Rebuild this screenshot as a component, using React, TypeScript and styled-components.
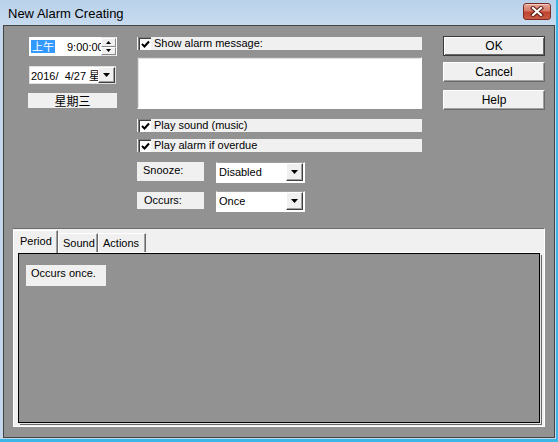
import { createGlobalStyle, styled } from "styled-components";

const GlobalStyle = createGlobalStyle`
  html, body {
    margin: 0;
    padding: 0;
    background: #ffffff;
  }
  body {
    font-family: "Liberation Sans", Arial, "Noto Sans CJK SC", sans-serif;
    font-size: 11px;
    color: #000;
  }
  * {
    box-sizing: border-box;
  }
`;

const FACE = "#f0f0f0";
const DARK = "#929292";

const Window = styled.div`
  width: 558px;
  height: 442px;
  display: flex;
  flex-direction: column;
  padding: 0 3px 4px 3px;
  background: linear-gradient(#b9d1ea, #c7dbef 25px, #c3d8ed 25px);
  box-shadow: inset -2px -3px 0 #3cb6e4;
`;

const TitleBar = styled.div`
  height: 25px;
  flex-shrink: 0;
  display: flex;
  align-items: center;
  justify-content: space-between;
  padding: 2px 4px 0 5px;
`;

const Title = styled.div`
  font-family: "Liberation Sans", Arial, sans-serif;
  font-size: 13px;
  color: #000;
`;

const CloseBtn = styled.div`
  width: 28px;
  height: 17px;
  margin-top: -4px;
  border: 1px solid #7d2b22;
  border-radius: 3px;
  background: linear-gradient(#e9a797, #d47a68 45%, #c0432f 55%, #c85c45);
  display: flex;
  align-items: center;
  justify-content: center;
  box-shadow: inset 0 1px 0 rgba(255, 255, 255, 0.45);
`;

const Body = styled.div`
  flex: 1;
  background: ${DARK};
  border: 1px solid #444;
  padding: 11px 9px 10px 9px;
  display: flex;
  flex-direction: column;
`;

const Top = styled.div`
  height: 191px;
  flex-shrink: 0;
  display: flex;
  padding-left: 15px;
`;

const LeftCol = styled.div`
  width: 89px;
  display: flex;
  flex-direction: column;
`;

const TimeBox = styled.div`
  height: 19px;
  margin-left: 1px;
  display: flex;
  background: #fff;
`;

const TimeText = styled.div`
  width: 72px;
  display: flex;
  align-items: center;
  padding-left: 2px;
  white-space: nowrap;
  overflow: hidden;
`;

const Selected = styled.span`
  background: #3399ff;
  color: #fff;
  height: 13px;
  line-height: 13px;
  padding: 0 1px;
  margin-right: 12px;
  font-family: "Noto Sans CJK SC", sans-serif;
`;

const Spin = styled.div`
  width: 15px;
  display: flex;
  flex-direction: column;
  background: #e6e6e6;
  padding: 1px 0;
`;

const SpinHalf = styled.div`
  flex: 1;
  background: ${FACE};
  border-top: 1px solid #fff;
  border-left: 1px solid #fff;
  border-right: 1px solid #8a8a8a;
  border-bottom: 1px solid #8a8a8a;
  display: flex;
  align-items: center;
  justify-content: center;
`;

const DateBox = styled.div`
  height: 18px;
  margin-top: 10px;
  margin-left: 1px;
  width: 87px;
  display: flex;
  background: #fff;
  border: 1px solid #e0e0e0;
`;

const DateText = styled.div`
  flex: 1;
  display: flex;
  align-items: center;
  padding-left: 1px;
  white-space: pre;
  overflow: hidden;
`;

const DropBtn = styled.div<{ $w: number }>`
  width: ${(p) => p.$w}px;
  flex-shrink: 0;
  background: ${FACE};
  border-top: 1px solid #fff;
  border-left: 1px solid #fff;
  border-right: 1px solid #404040;
  border-bottom: 1px solid #404040;
  box-shadow: inset -1px -1px 0 #a0a0a0;
  display: flex;
  align-items: center;
  justify-content: center;
`;

const Weekday = styled.div`
  height: 15px;
  margin-top: 9px;
  background: ${FACE};
  display: flex;
  align-items: center;
  justify-content: center;
  font-family: "Noto Sans CJK SC", sans-serif;
  font-size: 12px;
`;

const MidCol = styled.div`
  width: 285px;
  margin-left: 20px;
  display: flex;
  flex-direction: column;
`;

const CheckRow = styled.div<{ $mt: number }>`
  height: 13px;
  margin-top: ${(p) => p.$mt}px;
  background: ${FACE};
  display: flex;
  align-items: center;
  padding-left: 1px;
  line-height: 13px;
`;

const CheckBox = styled.div`
  width: 13px;
  height: 13px;
  background: #fff;
  border-top: 1px solid #808080;
  border-left: 1px solid #808080;
  box-shadow: inset 1px 1px 0 #404040;
  display: flex;
  align-items: center;
  justify-content: center;
  margin-right: 3px;
`;

const MessageBox = styled.div`
  height: 52px;
  margin-top: 7px;
  background: #fff;
  border-top: 1px solid #a0a0a0;
  border-left: 1px solid #a0a0a0;
  border-right: 1px solid #fff;
  border-bottom: 1px solid #fff;
  box-shadow: inset 1px 1px 0 #e3e3e3;
`;

const FieldRow = styled.div<{ $mt: number }>`
  display: flex;
  align-items: flex-start;
  margin-top: ${(p) => p.$mt}px;
`;

const FieldLabel = styled.div<{ $h: number; $pl: number; $mt: number }>`
  width: 67px;
  height: ${(p) => p.$h}px;
  margin-top: ${(p) => p.$mt}px;
  background: ${FACE};
  padding: 2px 0 0 ${(p) => p.$pl}px;
  line-height: 13px;
`;

const Combo = styled.div`
  width: 89px;
  height: 21px;
  margin-left: 12px;
  display: flex;
  background: #fff;
  border-top: 1px solid #a0a0a0;
  border-left: 1px solid #fff;
  border-right: 1px solid #fff;
  border-bottom: 1px solid #fff;
  padding: 0 1px 1px 0;
`;

const ComboText = styled.div`
  flex: 1;
  display: flex;
  align-items: center;
  padding-left: 2px;
`;

const RightCol = styled.div`
  width: 102px;
  margin-left: 21px;
  display: flex;
  flex-direction: column;
  margin-top: -1px;
`;

const Button = styled.div<{ $mt: number; $default?: boolean }>`
  height: 20px;
  margin-top: ${(p) => p.$mt}px;
  background: ${FACE};
  display: flex;
  align-items: center;
  justify-content: center;
  font-size: 12px;
  border: 1px solid ${(p) => (p.$default ? "#3a3a3a" : FACE)};
  border-top-color: ${(p) => (p.$default ? "#3a3a3a" : "#fff")};
  border-left-color: ${(p) => (p.$default ? "#3a3a3a" : "#fff")};
  border-right-color: ${(p) => (p.$default ? "#3a3a3a" : "#6a6a6a")};
  border-bottom-color: ${(p) => (p.$default ? "#3a3a3a" : "#6a6a6a")};
  box-shadow: ${(p) =>
    p.$default
      ? "inset 1px 1px 0 #fff, inset -1px -1px 0 #6a6a6a"
      : "inset -1px -1px 0 #a0a0a0"};
`;

const TabControl = styled.div`
  width: 532px;
  height: 199px;
  flex-shrink: 0;
  background: ${FACE};
  border-top: 1px solid #6d6d6d;
  border-right: 1px solid #fff;
  display: flex;
  flex-direction: column;
`;

const TabStrip = styled.div`
  height: 23px;
  display: flex;
  align-items: flex-end;
  position: relative;
  z-index: 1;
`;

const Tab = styled.div<{ $active?: boolean; $w: number }>`
  width: ${(p) => p.$w}px;
  height: ${(p) => (p.$active ? 23 : 19)}px;
  margin-bottom: ${(p) => (p.$active ? -1 : 0)}px;
  background: ${FACE};
  border-left: 1px solid #fff;
  border-top: 1px solid #fff;
  border-right: 1px solid #6a6a6a;
  box-shadow: inset -1px 0 0 #a0a0a0;
  padding: ${(p) => (p.$active ? "4px 0 0 6px" : "3px 0 0 4px")};
  line-height: 13px;
`;

const Page = styled.div`
  flex: 1;
  border-top: 1px solid #fff;
  border-left: 1px solid #fff;
  border-bottom: 1px solid #fff;
  padding: 0 4px 3px 4px;
  display: flex;
`;

const Panel = styled.div`
  flex: 1;
  background: ${DARK};
  border: 1px solid #000;
  box-shadow: 1px 1px 0 #e3e3e3, 2px 2px 0 #6a6a6a;
  padding: 11px 0 0 7px;
`;

const InfoLabel = styled.div`
  width: 80px;
  height: 21px;
  background: ${FACE};
  padding: 2px 0 0 5px;
  line-height: 13px;
`;

const DownArrow = ({ w = 7, h = 4 }: { w?: number; h?: number }) => (
  <svg width={w} height={h} viewBox={`0 0 ${w} ${h}`}>
    <polygon points={`0,0 ${w},0 ${w / 2},${h}`} fill="#000" />
  </svg>
);

const UpArrow = () => (
  <svg width="5" height="3" viewBox="0 0 5 3">
    <polygon points="0,3 5,3 2.5,0" fill="#000" />
  </svg>
);

const Check = () => (
  <svg width="9" height="9" viewBox="0 0 9 9">
    <polyline
      points="1,4 3.5,6.5 8,1.5"
      fill="none"
      stroke="#000"
      strokeWidth="2"
    />
  </svg>
);

const CloseX = () => (
  <svg width="14" height="11" viewBox="0 0 14 11">
    <g strokeLinecap="square">
      <path d="M3 2 L11 9 M11 2 L3 9" stroke="#5e1d15" strokeWidth="4.2" />
      <path d="M3 2 L11 9 M11 2 L3 9" stroke="#fff" strokeWidth="2.2" />
    </g>
  </svg>
);

export default function App() {
  return (
    <>
      <GlobalStyle />
      <Window>
        <TitleBar>
          <Title>New Alarm Creating</Title>
          <CloseBtn>
            <CloseX />
          </CloseBtn>
        </TitleBar>

        <Body>
          <Top>
            <LeftCol>
              <TimeBox>
                <TimeText>
                  <Selected>上午</Selected>
                  9:00:00
                </TimeText>
                <Spin>
                  <SpinHalf>
                    <UpArrow />
                  </SpinHalf>
                  <SpinHalf>
                    <DownArrow w={5} h={3} />
                  </SpinHalf>
                </Spin>
              </TimeBox>
              <DateBox>
                <DateText>2016/  4/27 星期三</DateText>
                <DropBtn $w={17}>
                  <DownArrow />
                </DropBtn>
              </DateBox>
              <Weekday>星期三</Weekday>
            </LeftCol>

            <MidCol>
              <CheckRow $mt={0}>
                <CheckBox>
                  <Check />
                </CheckBox>
                Show alarm message:
              </CheckRow>
              <MessageBox />
              <CheckRow $mt={10}>
                <CheckBox>
                  <Check />
                </CheckBox>
                Play sound (music)
              </CheckRow>
              <CheckRow $mt={7}>
                <CheckBox>
                  <Check />
                </CheckBox>
                Play alarm if overdue
              </CheckRow>
              <FieldRow $mt={10}>
                <FieldLabel $h={19} $pl={6} $mt={0}>
                  Snooze:
                </FieldLabel>
                <Combo>
                  <ComboText>Disabled</ComboText>
                  <DropBtn $w={17}>
                    <DownArrow />
                  </DropBtn>
                </Combo>
              </FieldRow>
              <FieldRow $mt={8}>
                <FieldLabel $h={17} $pl={7} $mt={1}>
                  Occurs:
                </FieldLabel>
                <Combo>
                  <ComboText>Once</ComboText>
                  <DropBtn $w={17}>
                    <DownArrow />
                  </DropBtn>
                </Combo>
              </FieldRow>
            </MidCol>

            <RightCol>
              <Button $mt={0} $default>
                OK
              </Button>
              <Button $mt={6}>Cancel</Button>
              <Button $mt={8}>Help</Button>
            </RightCol>
          </Top>

          <TabControl>
            <TabStrip>
              <Tab $active $w={45}>
                Period
              </Tab>
              <Tab $w={40}>Sound</Tab>
              <Tab $w={48}>Actions</Tab>
            </TabStrip>
            <Page>
              <Panel>
                <InfoLabel>Occurs once.</InfoLabel>
              </Panel>
            </Page>
          </TabControl>
        </Body>
      </Window>
    </>
  );
}
